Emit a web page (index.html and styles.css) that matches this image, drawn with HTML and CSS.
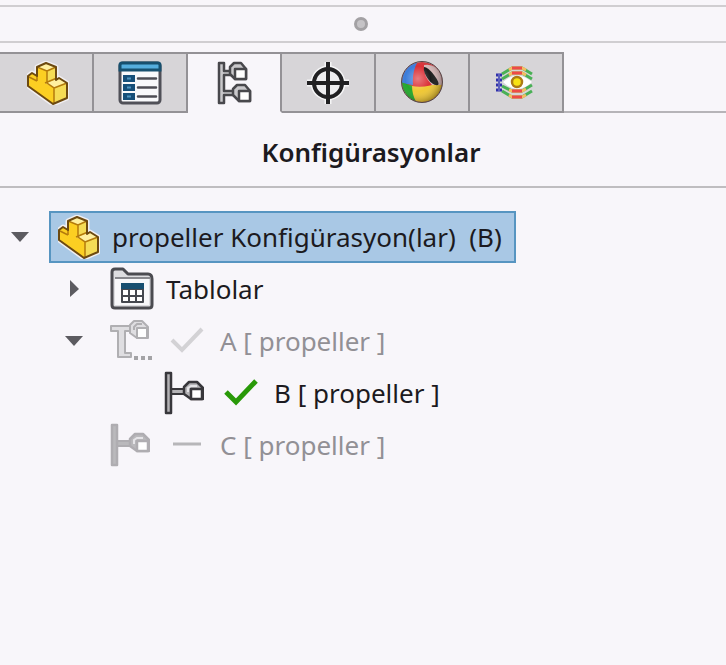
FILE: index.html
```html
<!DOCTYPE html>
<html lang="tr">
<head>
<meta charset="utf-8">
<meta name="viewport" content="width=device-width, initial-scale=1">
<title>Konfigürasyonlar</title>
<link rel="stylesheet" href="styles.css">
</head>
<body>
<svg class="defs" aria-hidden="true">
  <symbol id="part" viewBox="0 0 42 44">
    <path d="M1 15 5 12 10 15V6L19 2 29 6V19L32 17 40 22V37L26 43 1 25Z" fill="#fff" stroke="#f1eff1" stroke-width="5" stroke-linejoin="round"/>
    <path d="M1 15 5 12 10 15V6L19 2 29 6V19L32 17 40 22V37L26 43 1 25Z" fill="#fccf22"/>
    <path d="M10 6 19 2 29 6 20 10ZM18 22 31 17 40 22 27 27Z" fill="#fff0a0"/>
    <path d="M20 10 29 6V18L20 22ZM27 27 40 22V37L27 42Z" fill="#f5dc55"/>
    <path d="M10 6 20 10V22L27 27V42M10 15V20M20 10 29 6M27 27 40 22M18 22 30 17M2 16 10 20" fill="none" stroke="#b47b0c" stroke-width="1.5"/>
    <path d="M1 15 5 12 10 15V6L19 2 29 6V19L32 17 40 22V37L26 43 1 25Z" fill="none" stroke="#6d4a10" stroke-width="2" stroke-linejoin="round"/>
  </symbol>
  <symbol id="config" viewBox="0 0 40 44">
    <path d="M7 18H22V23H7Z" fill="#b4b3b6" stroke="currentColor" stroke-width="2"/>
    <path d="M2 2H7V42H2Z" fill="#b4b3b6" stroke="currentColor" stroke-width="2.500" stroke-linejoin="round"/>
    <path d="M20 23V16L25 11H33L39 17V28H27Z" fill="#b4b3b6" stroke="currentColor" stroke-width="2.500" stroke-linejoin="round"/>
    <path d="M24 21V17L27 15H33" fill="none" stroke="#e4e3e6" stroke-width="2"/>
    <path d="M27 18H38V28H27Z" fill="#fff" stroke="currentColor" stroke-width="2.500" stroke-linejoin="round"/>
  </symbol>
</svg>

<main class="panel">
  <div class="splitter" role="separator"><span class="grip"></span></div>

  <div class="tabs" role="tablist">
    <button class="tab tab-first" role="tab" aria-label="Parça">
      <svg class="icon-part"><use href="#part"/></svg>
    </button>
    <button class="tab" role="tab" aria-label="Özellikler">
      <svg class="icon-tab" viewBox="0 0 44 44">
        <rect x="2" y="2" width="40" height="40" rx="3" fill="#f8f9fb" stroke="#505058" stroke-width="3"/>
        <path d="M2 9V4Q2 2 4 2H40Q42 2 42 4V9Z" fill="#55aede" stroke="#17506f" stroke-width="3"/>
        <path d="M5 14H17V21H5ZM5 23H17V30H5ZM5 32H17V39H5Z" fill="#164f79"/>
        <path d="M9 17.500H13M9 26.500H13M9 35.500H13" stroke="#4e94bf" stroke-width="2"/>
        <path d="M20 17.500H38M20 26.500H38M20 35.500H38" stroke="#4d4d55" stroke-width="2.500" stroke-linecap="round"/>
      </svg>
    </button>
    <button class="tab tab-active" role="tab" aria-selected="true" aria-label="Konfigürasyonlar">
      <svg class="icon-tab" viewBox="0 0 44 44">
        <g fill="#c9c8cb" stroke="#48484c" stroke-width="2.500" stroke-linejoin="round">
          <path d="M7 2H12V10H20V14H12V30H22V34H12V42H7Z"/>
          <path d="M18 13V6L22 2H29L34 8V18H23Z"/>
          <path d="M23 8H34V18H23Z" fill="#fff"/>
          <path d="M21 34V28L25 24H33L38 30V40H27Z"/>
          <path d="M27 30H38V40H27Z" fill="#fff"/>
        </g>
      </svg>
    </button>
    <button class="tab" role="tab" aria-label="Ölçü">
      <svg class="icon-tab" viewBox="0 0 44 44">
        <g fill="none" stroke="#f5f5f6" stroke-width="7"><circle cx="22" cy="22" r="14"/><path d="M22 1V43M1 22H43"/></g>
        <circle cx="22" cy="22" r="14" fill="#ededef"/>
        <g fill="none" stroke="#202022" stroke-width="4"><circle cx="22" cy="22" r="14"/><path d="M22 1V43M1 22H43"/></g>
      </svg>
    </button>
    <button class="tab" role="tab" aria-label="Görünüm">
      <svg class="icon-tab" viewBox="0 0 44 44">
        <defs>
          <clipPath id="ball-edge"><circle cx="22" cy="21" r="20"/></clipPath>
          <radialGradient id="shine" cx=".4" cy=".42" r=".62"><stop offset="0" stop-color="#fff" stop-opacity=".4"/><stop offset=".5" stop-color="#fff" stop-opacity=".05"/><stop offset="1" stop-opacity=".35"/></radialGradient>
        </defs>
        <g clip-path="url(#ball-edge)">
          <path d="M0 0H44V44H0Z" fill="#d9242b"/>
          <path d="M0 0H18Q12 10 13 24L0 22Z" fill="#3276d8"/>
          <path d="M0 21 13 25Q12 35 18 44H0Z" fill="#17a421"/>
          <path d="M12 25Q25 28 44 20V44H18Q12 35 12 25Z" fill="#efc52a"/>
          <path d="M24 4Q36 2 42 14V24L32 24Q23 15 24 4Z" fill="#d8b7b7"/>
          <path d="M24 6Q28 6 34 14T38 24Q33 25 28 18T24 6Z" fill="#111"/>
        </g>
        <circle cx="22" cy="21" r="20.500" fill="url(#shine)" stroke="#554344"/>
      </svg>
    </button>
    <button class="tab" role="tab" aria-label="Akış">
      <svg class="icon-flow" viewBox="0 0 40 40">
        <path d="M7 19Q21 6 36 19Q21 33 7 19Z" fill="#fff"/>
        <g fill="none" stroke-width="3">
          <path d="M6 11 16 5H26L36 11M6 16 16 10H26L36 16M6 23 16 28H26L36 22M6 28 16 34H26L36 28" stroke="#49b055"/>
          <path d="M13 7 16 5H26L30 7M13 12 16 10H26L30 12M13 27 16 28H26L30 26M13 32 16 34H26L30 32" stroke="#f6bd63"/>
          <path d="M16 5H26M16 10H26M16 28H26M16 34H26" stroke="#ee4a48"/>
          <path d="M0 12H6M0 17H6M0 22H6M0 27H6" stroke="#3030ac"/>
        </g>
        <path d="M3 11V28" stroke="#5c60bd" stroke-width="2"/>
        <circle cx="21" cy="19" r="5" fill="#f7e313" stroke="#ac7b16" stroke-width="2.500"/>
      </svg>
    </button>
  </div>

  <h1 class="title">Konfigürasyonlar</h1>

  <ul class="tree" role="tree">
    <li role="treeitem" aria-expanded="true">
      <div class="row">
        <button class="toggle" aria-label="Daralt"><svg class="arrow" viewBox="0 0 20 20"><path d="M1 5H19L10 15Z"/></svg></button>
        <span class="selected"><svg class="icon-part"><use href="#part"/></svg><span class="label">propeller Konfigürasyon(lar)  (B)</span></span>
      </div>
      <ul class="branch" role="group">
        <li role="treeitem" aria-expanded="false">
          <div class="row">
            <button class="toggle" aria-label="Genişlet"><svg class="arrow" viewBox="0 0 20 20"><path d="M6 1 15 10 6 18Z"/></svg></button>
            <svg class="icon-row" viewBox="0 0 44 44">
              <path d="M2 38V5Q2 2 5 2H13L18 7H38Q42 7 42 12V38Q42 41 39 41H5Q2 41 2 38Z" fill="#dddde0" stroke="#4b4b50" stroke-width="3" stroke-linejoin="round"/>
              <path d="M5 12H39V38H5Z" fill="#f8f8fa"/><path d="M5 11H40" stroke="#88888d" stroke-width="2"/>
              <rect x="11" y="16" width="23" height="20" rx="1" fill="#45484f"/>
              <path d="M11 16H34V22H11Z" fill="#174f70"/>
              <path d="M13 23H18V28H13ZM20 23H25V28H20ZM27 23H32V28H27ZM13 30H18V34H13ZM20 30H25V34H20ZM27 30H32V34H27Z" fill="#fff"/>
            </svg>
            <span class="label">Tablolar</span>
          </div>
        </li>
        <li role="treeitem" aria-expanded="true">
          <div class="row muted">
            <button class="toggle" aria-label="Daralt"><svg class="arrow" viewBox="0 0 20 20"><path d="M1 5H19L10 15Z"/></svg></button>
            <svg class="icon-row" viewBox="0 0 44 44">
              <g fill="#dddcdf" stroke="#a9a8ab" stroke-width="2" stroke-linejoin="round">
                <path d="M1 7H21V12H15V34H21V38H8V12H1Z"/>
                <path d="M20 14V6L24 2H32L38 8V19H27Z"/>
                <path d="M24 11V8L27 5H32" fill="none"/>
                <path d="M27 9H37V19H27Z" fill="#fff"/>
              </g>
              <path d="M24 37H28V41H24ZM31 37H35V41H31ZM38 37H42V41H38Z" fill="#9b9b9e"/>
            </svg>
            <svg class="mark" viewBox="0 0 34 32"><path d="M2 15 12 25 32 4" fill="none" stroke="#d3d2d5" stroke-width="4"/></svg>
            <span class="label">A [ propeller ]</span>
          </div>
          <ul class="branch" role="group">
            <li role="treeitem">
              <div class="row">
                <span class="toggle"></span>
                <svg class="icon-config"><use href="#config"/></svg>
                <svg class="mark" viewBox="0 0 34 32"><path d="M2 15 12 25 32 4" fill="none" stroke="#299908" stroke-width="5"/></svg>
                <span class="label">B [ propeller ]</span>
              </div>
            </li>
          </ul>
        </li>
        <li role="treeitem">
          <div class="row muted">
            <span class="toggle"></span>
            <svg class="icon-config"><use href="#config"/></svg>
            <svg class="mark" viewBox="0 0 34 32"><path d="M3 15H31" stroke="#b7b6b9" stroke-width="3"/></svg>
            <span class="label">C [ propeller ]</span>
          </div>
        </li>
      </ul>
    </li>
  </ul>
</main>
</body>
</html>
```
FILE: styles.css
```css
* {
  box-sizing: border-box;
}

body {
  margin: 0;
  background: #f8f6fa;
  color: #1c1a20;
  font-family: "Noto Sans", "Open Sans", sans-serif;
  font-size: 26px;
}

button {
  padding: 0;
  border: 0;
  background: none;
  color: inherit;
  font: inherit;
}

ul {
  margin: 0;
  padding: 0;
  list-style: none;
}

svg {
  display: block;
  flex: none;
}

.defs {
  position: absolute;
  width: 0;
  height: 0;
}

.panel {
  padding-top: 5px;
}

.splitter {
  display: flex;
  align-items: center;
  justify-content: center;
  height: 38px;
  margin-bottom: 9px;
  padding-right: 4px;
  border-top: 2px solid #d0ced1;
  border-bottom: 2px solid #d0ced1;
}

.grip {
  width: 14px;
  height: 14px;
  border: 3px solid #a3a1a4;
  border-radius: 50%;
  background: #c5c3c6;
}

.tabs {
  display: flex;
  height: 61px;
}

.tabs::after {
  content: "";
  flex: 1;
  border-bottom: 2px solid #b6b4b8;
}

.tab {
  display: flex;
  flex: 0 0 94px;
  align-items: center;
  justify-content: center;
  border: solid #949296;
  border-width: 2px 2px 2px 0;
  background: #d7d5d8;
}

.tab-first {
  padding-left: 4px;
}

.tab-active {
  border-bottom-color: #f8f6fa;
  background: #f8f6fa;
}

.icon-tab {
  width: 44px;
  height: 44px;
}

.icon-flow {
  width: 40px;
  height: 40px;
}

.icon-part {
  width: 42px;
  height: 44px;
}

.icon-row {
  width: 44px;
  height: 44px;
}

.icon-config {
  width: 40px;
  height: 44px;
  margin-right: 4px;
  color: #38373b;
}

.title {
  margin: 0;
  padding: 5px 0 0 16px;
  border-bottom: 2px solid #bfbdc0;
  font-size: 26px;
  font-weight: 600;
  line-height: 68px;
  text-align: center;
}

.tree {
  padding: 23px 0 0 10px;
}

.branch {
  padding-left: 54px;
}

.row {
  display: flex;
  align-items: center;
  height: 52px;
  white-space: pre;
}

.toggle {
  flex: none;
  width: 22px;
  margin-right: 24px;
}

.arrow {
  width: 20px;
  height: 20px;
  fill: #5c5b60;
}

.selected {
  display: flex;
  align-items: center;
  height: 52px;
  margin-left: -7px;
  padding: 0 12px 0 7px;
  border: 2px solid #5795c1;
  background: #a9c8e5;
}

.label {
  margin-left: 12px;
  line-height: 36px;
}

.mark {
  width: 34px;
  height: 32px;
  margin-left: 16px;
}

.mark + .label {
  margin-left: 16px;
}

.muted {
  color: #929095;
}

.muted .icon-config {
  color: #a8a6aa;
}

.muted .icon-config,
.muted .icon-row {
  opacity: 0.9;
}
```
